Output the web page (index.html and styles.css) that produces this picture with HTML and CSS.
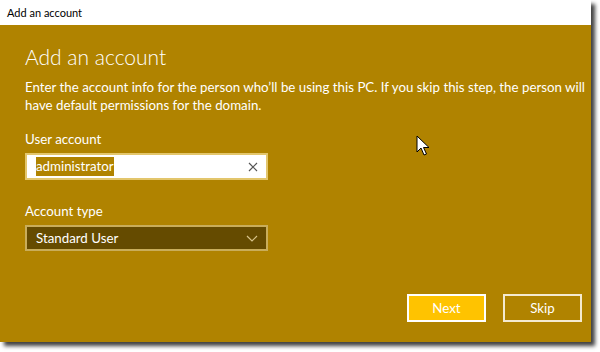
FILE: index.html
```html
<!DOCTYPE html>
<html>
<head>
<meta charset="utf-8">
<link rel="stylesheet" href="styles.css">
</head>
<body>
<div class="window">
  <div class="titlebar">Add an account</div>
  <div class="content">
    <h1 class="heading">Add an account</h1>
    <p class="desc">Enter the account info for the person who’ll be using this PC. If you skip this step, the person will have default permissions for the domain.</p>
    <div class="field">
      <div class="label">User account</div>
      <div class="input">
        <span class="selected">administrator</span>
        <svg class="clear" width="10" height="10" viewBox="0 0 10 10"><path d="M1 1L9 9M9 1L1 9" stroke="#555" stroke-width="1.2" fill="none"/></svg>
      </div>
    </div>
    <div class="field type">
      <div class="label">Account type</div>
      <div class="select">
        <span>Standard User</span>
        <svg class="chev" width="12" height="7" viewBox="0 0 12 7"><path d="M1 1L6 6L11 1" stroke="#d8c48a" stroke-width="1.2" fill="none"/></svg>
      </div>
    </div>
    <div class="buttons">
      <div class="btn primary">Next</div>
      <div class="btn">Skip</div>
    </div>
  </div>
  <svg class="cursor" width="14" height="22" viewBox="0 0 14 22"><path d="M1 1L1 17L5 13L8 20L10.5 19L7.5 12.5L13 12.5Z" fill="#fff" stroke="#000" stroke-width="1" stroke-linejoin="round"/></svg>
</div>
</body>
</html>
```
FILE: styles.css
```css
html, body { margin: 0; padding: 0; background: #fff; }
body { width: 600px; height: 352px; overflow: hidden; font-family: "Lato", "Noto Sans", sans-serif; }
.window {
  position: relative;
  width: 591px;
  height: 342px;
  display: flex;
  flex-direction: column;
  box-shadow: 4px 4px 4px rgba(0,0,0,0.75);
}
.titlebar {
  height: 25px;
  background: #fff;
  color: #000;
  font-size: 11px;
  line-height: 25px;
  padding-left: 7px;
  box-sizing: border-box;
}
.content {
  flex: 1;
  background: #b08300;
  color: #fff;
  padding: 19px 9px 0 25px;
  display: flex;
  flex-direction: column;
}
.heading {
  margin: 0;
  font-weight: 300;
  font-size: 21px;
  line-height: 26px;
}
.desc {
  margin: 8px 0 0 0;
  font-size: 13.3px;
  line-height: 18px;
  width: 560px;
}
.field { margin-top: 16px; }
.field.type { margin-top: 22px; }
.label { font-size: 13.3px; line-height: 18px; }
.input {
  margin-top: 5px;
  width: 243px;
  height: 27px;
  box-sizing: border-box;
  border: 2px solid #e3c66c;
  background: #fff;
  display: flex;
  align-items: center;
  padding: 0 8px 0 9px;
}
.selected {
  background: #b08300;
  color: #fff;
  font-size: 13.3px;
  line-height: 19px;
  flex: none;
}
.clear { margin-left: auto; }
.select {
  margin-top: 5px;
  width: 243px;
  height: 26px;
  box-sizing: border-box;
  border: 2px solid #c9ad5a;
  background: #654b00;
  display: flex;
  align-items: center;
  padding: 0 8px 0 9px;
  font-size: 13.3px;
}
.chev { margin-left: auto; }
.buttons {
  margin-top: auto;
  margin-bottom: 20px;
  display: flex;
  justify-content: flex-end;
  gap: 17px;
}
.btn {
  width: 79px;
  height: 28px;
  box-sizing: border-box;
  border: 2px solid #f4ead0;
  display: flex;
  align-items: center;
  justify-content: center;
  font-size: 13.3px;
}
.btn.primary { background: #ffc300; border-color: #fff; }
.cursor { position: absolute; left: 416px; top: 135px; }
```
